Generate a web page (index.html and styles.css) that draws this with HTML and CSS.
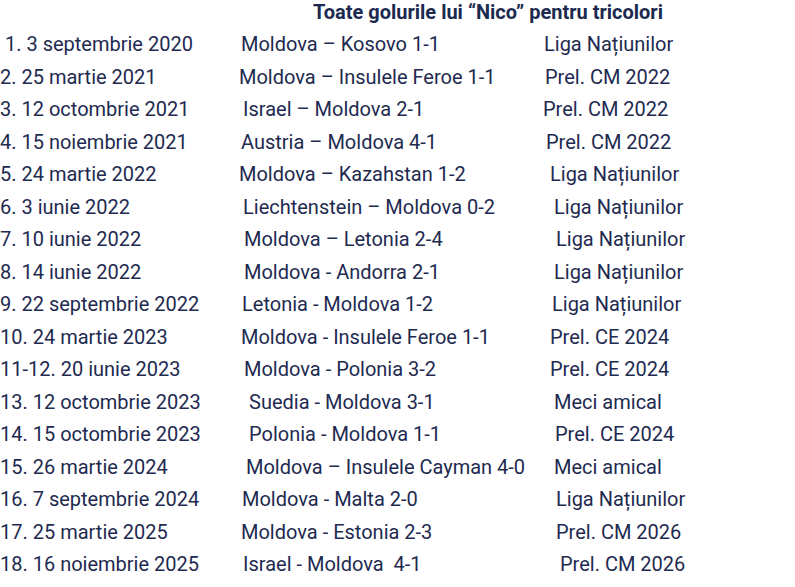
FILE: index.html
```html
<!DOCTYPE html>
<html lang="ro">
<head>
<meta charset="utf-8">
<link rel="stylesheet" href="styles.css">
</head>
<body>
<div class="page">
  <h2 class="title">Toate golurile lui “Nico” pentru tricolori</h2>
  <div class="goals">
    <div class="row"><span class="date">&nbsp;1. 3 septembrie 2020</span><span class="match">Moldova – Kosovo 1-1</span><span class="comp">Liga Națiunilor</span></div>
    <div class="row"><span class="date">2. 25 martie 2021</span><span class="match">Moldova – Insulele Feroe 1-1</span><span class="comp">Prel. CM 2022</span></div>
    <div class="row"><span class="date">3. 12 octombrie 2021</span><span class="match">Israel – Moldova 2-1</span><span class="comp">Prel. CM 2022</span></div>
    <div class="row"><span class="date">4. 15 noiembrie 2021</span><span class="match">Austria – Moldova 4-1</span><span class="comp">Prel. CM 2022</span></div>
    <div class="row"><span class="date">5. 24 martie 2022</span><span class="match">Moldova – Kazahstan 1-2</span><span class="comp">Liga Națiunilor</span></div>
    <div class="row"><span class="date">6. 3 iunie 2022</span><span class="match">Liechtenstein – Moldova 0-2</span><span class="comp">Liga Națiunilor</span></div>
    <div class="row"><span class="date">7. 10 iunie 2022</span><span class="match">Moldova – Letonia 2-4</span><span class="comp">Liga Națiunilor</span></div>
    <div class="row"><span class="date">8. 14 iunie 2022</span><span class="match">Moldova - Andorra 2-1</span><span class="comp">Liga Națiunilor</span></div>
    <div class="row"><span class="date">9. 22 septembrie 2022</span><span class="match">Letonia - Moldova 1-2</span><span class="comp">Liga Națiunilor</span></div>
    <div class="row"><span class="date">10. 24 martie 2023</span><span class="match">Moldova - Insulele Feroe 1-1</span><span class="comp">Prel. CE 2024</span></div>
    <div class="row"><span class="date">11-12. 20 iunie 2023</span><span class="match">Moldova - Polonia 3-2</span><span class="comp">Prel. CE 2024</span></div>
    <div class="row"><span class="date">13. 12 octombrie 2023</span><span class="match">Suedia - Moldova 3-1</span><span class="comp">Meci amical</span></div>
    <div class="row"><span class="date">14. 15 octombrie 2023</span><span class="match">Polonia - Moldova 1-1</span><span class="comp">Prel. CE 2024</span></div>
    <div class="row"><span class="date">15. 26 martie 2024</span><span class="match">Moldova – Insulele Cayman 4-0</span><span class="comp">Meci amical</span></div>
    <div class="row"><span class="date">16. 7 septembrie 2024</span><span class="match">Moldova - Malta 2-0</span><span class="comp">Liga Națiunilor</span></div>
    <div class="row"><span class="date">17. 25 martie 2025</span><span class="match">Moldova - Estonia 2-3</span><span class="comp">Prel. CM 2026</span></div>
    <div class="row"><span class="date">18. 16 noiembrie 2025</span><span class="match">Israel - Moldova&nbsp; 4-1</span><span class="comp">Prel. CM 2026</span></div>
  </div>
</div>
</body>
</html>
```

FILE: styles.css
```css
html, body {
  margin: 0;
  padding: 0;
  background: #ffffff;
}

body {
  font-family: Roboto, "Liberation Sans", Arial, sans-serif;
  font-size: 20px;
  color: #1e2a50;
}

.page {
  width: 795px;
}

.title {
  margin: 0;
  padding-left: 313px;
  font-size: 20px;
  font-weight: 700;
  line-height: 24px;
  color: #1c2a4f;
}

.goals {
  display: flex;
  flex-direction: column;
  padding-top: 8px;
}

.row {
  display: grid;
  grid-template-columns: 239px 303px 1fr;
  height: 32.5px;
  line-height: 24px;
  align-items: start;
  white-space: nowrap;
}

.date { padding-left: 0; }

/* per-row indents, as the source cells were aligned by hand */
.row:nth-child(1) .match { padding-left: 2px; }
.row:nth-child(1) .comp { padding-left: 2px; }
.row:nth-child(2) .match { padding-left: 0; }
.row:nth-child(2) .comp { padding-left: 3px; }
.row:nth-child(3) .match { padding-left: 4px; }
.row:nth-child(3) .comp { padding-left: 1px; }
.row:nth-child(4) .match { padding-left: 2px; }
.row:nth-child(4) .comp { padding-left: 4px; }
.row:nth-child(5) .match { padding-left: 0; }
.row:nth-child(5) .comp { padding-left: 8px; }
.row:nth-child(6) .match { padding-left: 4px; }
.row:nth-child(6) .comp { padding-left: 12px; }
.row:nth-child(7) .match { padding-left: 5px; }
.row:nth-child(7) .comp { padding-left: 14px; }
.row:nth-child(8) .match { padding-left: 5px; }
.row:nth-child(8) .comp { padding-left: 12px; }
.row:nth-child(9) .match { padding-left: 3px; }
.row:nth-child(9) .comp { padding-left: 10px; }
.row:nth-child(10) .match { padding-left: 2px; }
.row:nth-child(10) .comp { padding-left: 8px; }
.row:nth-child(11) .match { padding-left: 5px; }
.row:nth-child(11) .comp { padding-left: 8px; }
.row:nth-child(12) .match { padding-left: 10px; }
.row:nth-child(12) .comp { padding-left: 12px; }
.row:nth-child(13) .match { padding-left: 10px; }
.row:nth-child(13) .comp { padding-left: 13px; }
.row:nth-child(14) .match { padding-left: 7px; }
.row:nth-child(14) .comp { padding-left: 12px; }
.row:nth-child(15) .match { padding-left: 3px; }
.row:nth-child(15) .comp { padding-left: 14px; }
.row:nth-child(16) .match { padding-left: 2px; }
.row:nth-child(16) .comp { padding-left: 14px; }
.row:nth-child(17) .match { padding-left: 4px; }
.row:nth-child(17) .comp { padding-left: 18px; }
```
